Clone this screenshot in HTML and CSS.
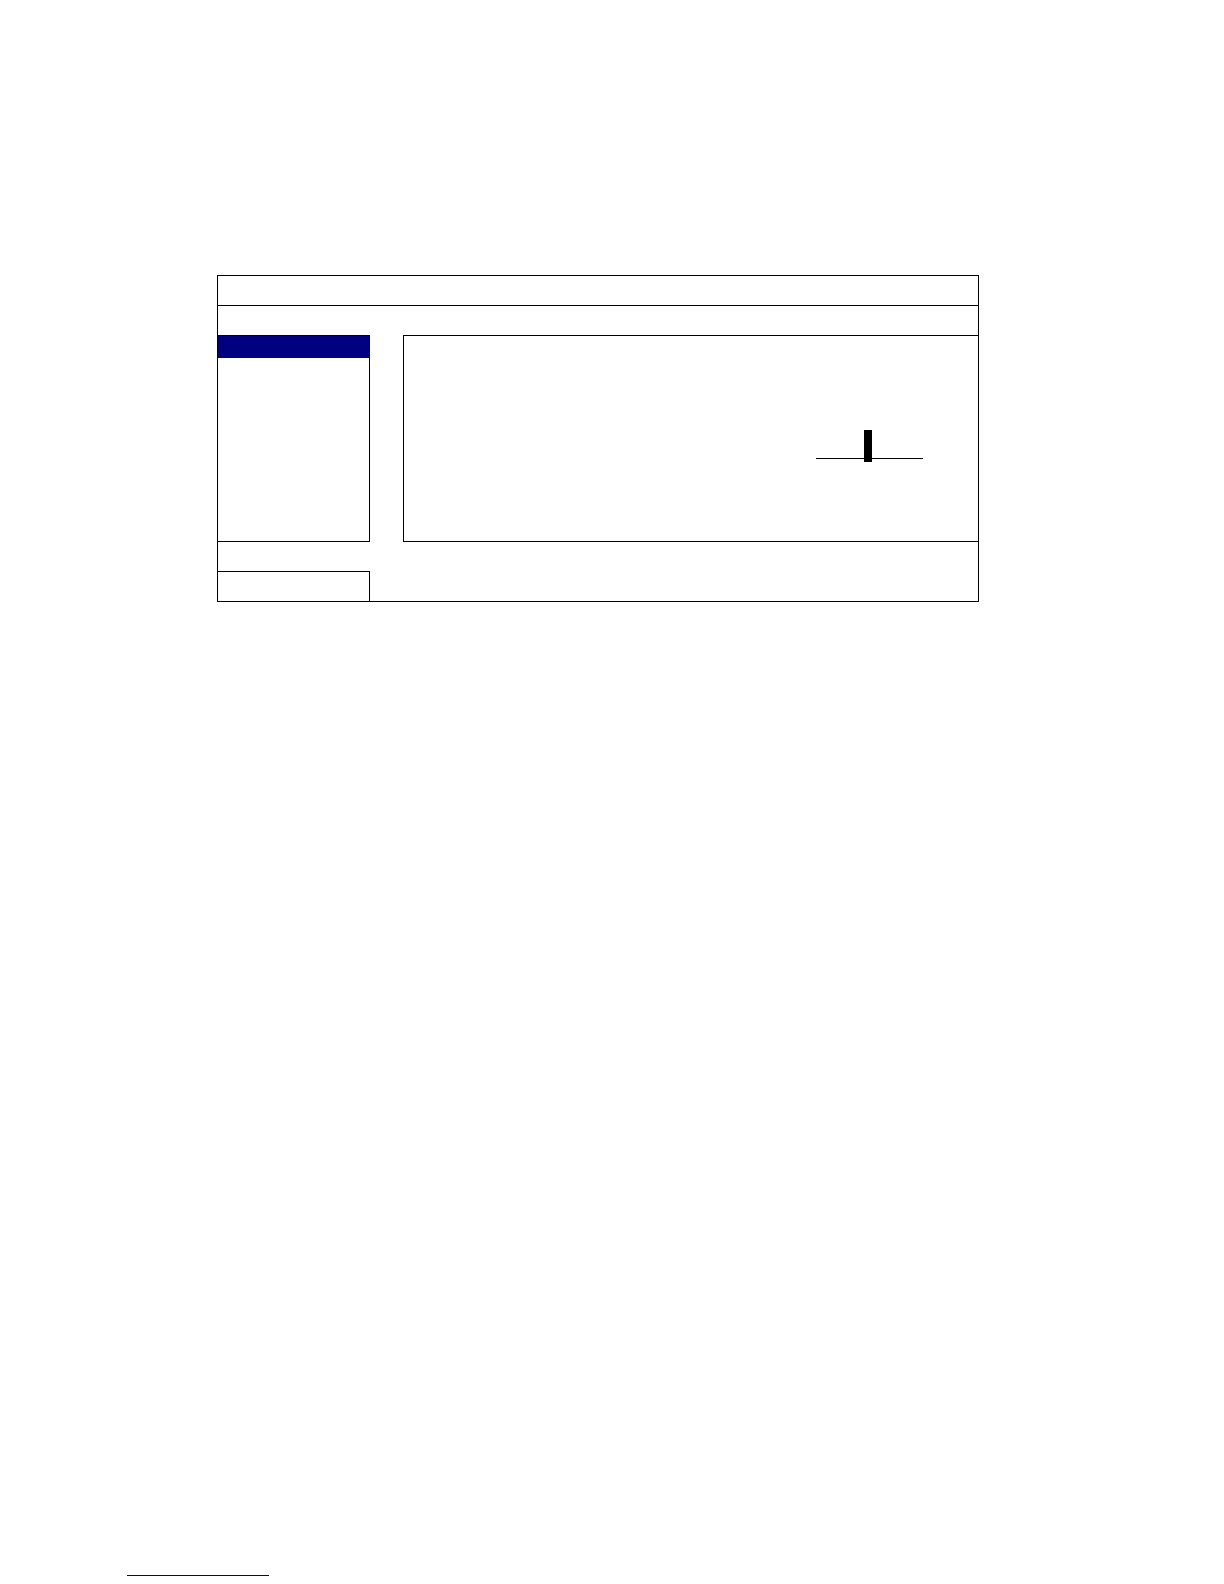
FILE: index.html
```html
<!DOCTYPE html>
<html lang="en">
<head>
<meta charset="utf-8">
<meta name="viewport" content="width=device-width, initial-scale=1">
<title>Settings</title>
<link rel="stylesheet" href="styles.css">
</head>
<body>
<main class="window">
  <header class="title-bar"></header>
  <div class="columns">
    <nav class="menu"><div class="menu-item selected"></div></nav>
    <section class="panel">
      <input class="slider" type="range" min="0" max="99" value="48" aria-label="Level">
    </section>
  </div>
  <footer class="status"></footer>
</main>
<a class="page-link" href="#" aria-label="Link"></a>
</body>
</html>
```

FILE: styles.css
```css
* {
  box-sizing: border-box;
}

body {
  display: flex;
  flex-direction: column;
  justify-content: space-between;
  min-height: 100vh;
  margin: 0;
  padding: 275px 245px 8px 217px;
  background: #fff;
  font-family: "Liberation Sans", Arial, sans-serif;
}

.window {
  border: 1px solid #000;
}

.title-bar {
  height: 30px;
  border-bottom: 1px solid #000;
}

.columns {
  display: grid;
  grid-template-columns: 152px 1fr;
  column-gap: 33px;
  padding: 29px 0;
}

.menu {
  border: 1px solid #000;
  border-left: 0;
}

.menu-item {
  height: 22px;
}

.selected {
  background: #000080;
}

.panel {
  display: flex;
  justify-content: flex-end;
  padding: 94px 55px 79px;
  border: 1px solid #000;
  border-right: 0;
}

.slider {
  appearance: none;
  width: 107px;
  height: 32px;
  margin: 0;
  background: linear-gradient(#000, #000) 0 28px / 100% 1px no-repeat;
}

.slider::-webkit-slider-thumb {
  appearance: none;
  width: 8px;
  height: 32px;
  background: #000;
}

.status {
  width: 152px;
  height: 30px;
  border-top: 1px solid #000;
  border-right: 1px solid #000;
}

.page-link {
  width: 142px;
  height: 16px;
  margin-left: -90px;
  border-bottom: 1px solid #000080;
}
```
